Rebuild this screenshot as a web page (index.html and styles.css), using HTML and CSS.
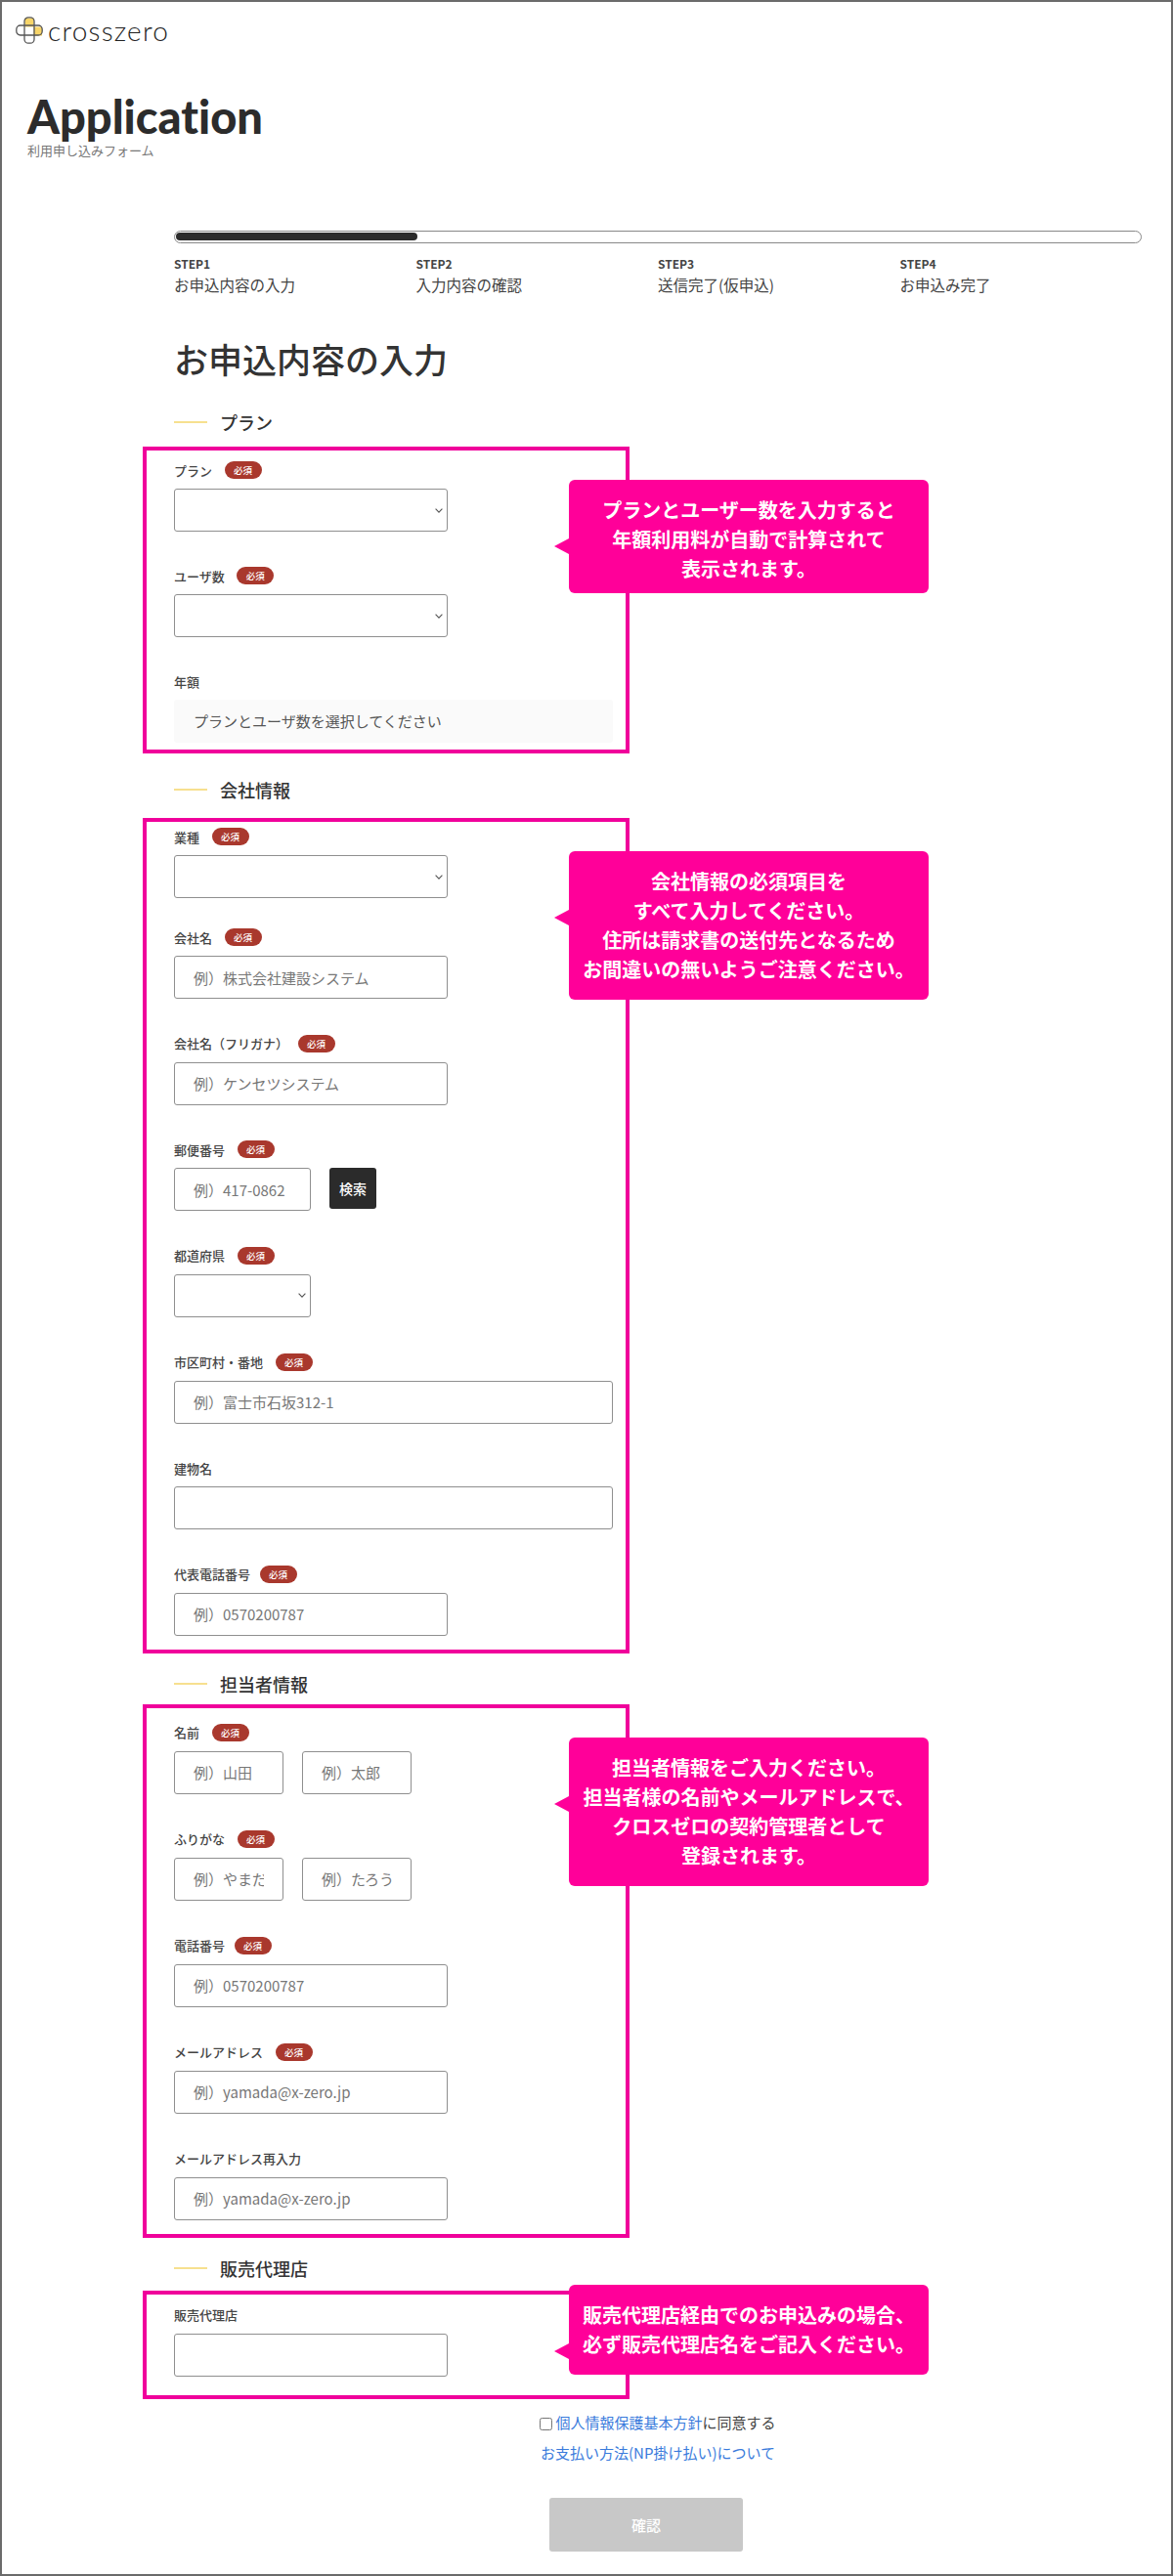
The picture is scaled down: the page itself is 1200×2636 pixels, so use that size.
FILE: index.html
```html
<!DOCTYPE html>
<html lang="ja">
<head>
    <meta charset="UTF-8">
    <meta name="viewport" content="width=device-width, initial-scale=1.0">
    <title>Application 利用申し込みフォーム</title>
    <link rel="stylesheet" href="styles.css">
</head>
<body>
    <div class="page">
        <header class="site-head">
            <div class="logo">
                <svg class="logo-icon" width="28" height="28" viewBox="0 0 28 28">
                    <path d="M9.5 1.5h9v9h8.5v9h-8.5v-9h-9z" fill="#f8d568"/>
                    <rect x="9" y="0.8" width="10" height="26.4" rx="4" fill="none" stroke="#555" stroke-width="1.3"/>
                    <rect x="0.8" y="9" width="26.4" height="10" rx="4" fill="none" stroke="#555" stroke-width="1.3"/>
                </svg>
                <span class="logo-text">crosszero</span>
            </div>
            <h1 class="page-title">Application</h1>
            <p class="page-sub">利用申し込みフォーム</p>
        </header>

        <main class="main">
            <div class="progress"><div class="progress-bar"></div></div>
            <ol class="steps">
                <li><span class="step-no">STEP1</span><span class="step-name">お申込内容の入力</span></li>
                <li><span class="step-no">STEP2</span><span class="step-name">入力内容の確認</span></li>
                <li><span class="step-no">STEP3</span><span class="step-name">送信完了(仮申込)</span></li>
                <li><span class="step-no">STEP4</span><span class="step-name">お申込み完了</span></li>
            </ol>

            <h2 class="form-title">お申込内容の入力</h2>

            <!-- プラン -->
            <section class="section section-plan">
                <h3 class="section-head">プラン</h3>
                <div class="box">
                    <div class="group">
                        <div class="label-row"><label>プラン</label><span class="badge">必須</span></div>
                        <select class="field w-md"></select>
                    </div>
                    <div class="group">
                        <div class="label-row"><label>ユーザ数</label><span class="badge">必須</span></div>
                        <select class="field w-md"></select>
                    </div>
                    <div class="group">
                        <div class="label-row"><label>年額</label></div>
                        <div class="price">プランとユーザ数を選択してください</div>
                    </div>
                    <div class="tip tip-short">プランとユーザー数を入力すると<br>年額利用料が自動で計算されて<br>表示されます。</div>
                </div>
            </section>

            <!-- 会社情報 -->
            <section class="section section-company">
                <h3 class="section-head">会社情報</h3>
                <div class="box">
                    <div class="group group-first">
                        <div class="label-row"><label>業種</label><span class="badge">必須</span></div>
                        <select class="field w-md"></select>
                    </div>
                    <div class="group">
                        <div class="label-row"><label>会社名</label><span class="badge">必須</span></div>
                        <input class="field w-md" type="text" placeholder="例）株式会社建設システム">
                    </div>
                    <div class="group">
                        <div class="label-row"><label>会社名（フリガナ）</label><span class="badge badge-near">必須</span></div>
                        <input class="field w-md" type="text" placeholder="例）ケンセツシステム">
                    </div>
                    <div class="group">
                        <div class="label-row"><label>郵便番号</label><span class="badge">必須</span></div>
                        <div class="zip-row">
                            <input class="field w-sm" type="text" placeholder="例）417-0862">
                            <button class="search-btn" type="button">検索</button>
                        </div>
                    </div>
                    <div class="group">
                        <div class="label-row"><label>都道府県</label><span class="badge">必須</span></div>
                        <select class="field w-sm"></select>
                    </div>
                    <div class="group">
                        <div class="label-row"><label>市区町村・番地</label><span class="badge">必須</span></div>
                        <input class="field w-full" type="text" placeholder="例）富士市石坂312-1">
                    </div>
                    <div class="group">
                        <div class="label-row"><label>建物名</label></div>
                        <input class="field w-full" type="text">
                    </div>
                    <div class="group">
                        <div class="label-row"><label>代表電話番号</label><span class="badge badge-near">必須</span></div>
                        <input class="field w-md" type="text" placeholder="例）0570200787">
                    </div>
                    <div class="tip">会社情報の必須項目を<br>すべて入力してください。<br>住所は請求書の送付先となるため<br>お間違いの無いようご注意ください。</div>
                </div>
            </section>

            <!-- 担当者情報 -->
            <section class="section section-contact">
                <h3 class="section-head">担当者情報</h3>
                <div class="box">
                    <div class="group">
                        <div class="label-row"><label>名前</label><span class="badge">必須</span></div>
                        <div class="name-row">
                            <input class="field w-xs" type="text" placeholder="例）山田">
                            <input class="field w-xs" type="text" placeholder="例）太郎">
                        </div>
                    </div>
                    <div class="group">
                        <div class="label-row"><label>ふりがな</label><span class="badge">必須</span></div>
                        <div class="name-row">
                            <input class="field w-xs" type="text" placeholder="例）やまだ">
                            <input class="field w-xs" type="text" placeholder="例）たろう">
                        </div>
                    </div>
                    <div class="group">
                        <div class="label-row"><label>電話番号</label><span class="badge badge-near">必須</span></div>
                        <input class="field w-md" type="text" placeholder="例）0570200787">
                    </div>
                    <div class="group">
                        <div class="label-row"><label>メールアドレス</label><span class="badge">必須</span></div>
                        <input class="field w-md" type="text" placeholder="例）yamada@x-zero.jp">
                    </div>
                    <div class="group">
                        <div class="label-row"><label>メールアドレス再入力</label></div>
                        <input class="field w-md" type="text" placeholder="例）yamada@x-zero.jp">
                    </div>
                    <div class="tip">担当者情報をご入力ください。<br>担当者様の名前やメールアドレスで、<br>クロスゼロの契約管理者として<br>登録されます。</div>
                </div>
            </section>

            <!-- 販売代理店 -->
            <section class="section section-agency">
                <h3 class="section-head">販売代理店</h3>
                <div class="box">
                    <div class="group">
                        <div class="label-row"><label>販売代理店</label></div>
                        <input class="field w-md" type="text">
                    </div>
                    <div class="tip tip-raised">販売代理店経由でのお申込みの場合、<br>必ず販売代理店名をご記入ください。</div>
                </div>
            </section>

            <div class="agree">
                <p><input class="agree-check" type="checkbox"><a href="#">個人情報保護基本方針</a>に同意する</p>
                <p class="agree-pay"><a href="#">お支払い方法(NP掛け払い)について</a></p>
            </div>
            <button class="confirm-btn" type="button" disabled>確認</button>
        </main>
    </div>
</body>
</html>
```

FILE: styles.css
```css
* {
    margin: 0;
    padding: 0;
    box-sizing: border-box;
}

body {
    font-family: "Noto Sans CJK JP", "Noto Sans", sans-serif;
    background-color: #fff;
    color: #333;
}

.page {
    width: 1200px;
    height: 2636px;
    border: 2px solid #6b6b6b;
    overflow: hidden;
}

/* ヘッダー */
.site-head {
    padding: 15px 0 0 14px;
}

.logo {
    display: flex;
    align-items: center;
    height: 28px;
}

.logo-text {
    margin-left: 5px;
    font-family: Lato, sans-serif;
    font-weight: 300;
    font-size: 28px;
    line-height: 28px;
    letter-spacing: 1.2px;
    color: #222;
}

.page-title {
    margin: 51px 0 0 12px;
    font-family: Lato, sans-serif;
    font-weight: 900;
    font-size: 47px;
    line-height: 46px;
    font-variant-ligatures: none;
    color: #2c2c2c;
}

.page-sub {
    margin: 3px 0 0 12px;
    font-size: 13px;
    line-height: 18px;
    color: #777;
}

/* メイン */
.main {
    width: 990px;
    margin: 73px 0 0 176px;
}

.progress {
    height: 13px;
    padding: 1px;
    border: 1.5px solid #888;
    border-radius: 7px;
}

.progress-bar {
    width: 247px;
    height: 8px;
    background-color: #2b2b2b;
    border-radius: 4px;
}

.steps {
    display: grid;
    grid-template-columns: repeat(4, 1fr);
    margin-top: 13px;
    list-style: none;
}

.steps li {
    display: flex;
    flex-direction: column;
}

.step-no {
    font-size: 12px;
    line-height: 16px;
    font-weight: 700;
    color: #444;
}

.step-name {
    margin-top: 2px;
    font-size: 15.5px;
    line-height: 22px;
    color: #444;
}

.form-title {
    margin-top: 43px;
    font-size: 35px;
    line-height: 44px;
    font-weight: 500;
    color: #333;
}

/* セクション */
.section-head {
    display: flex;
    align-items: center;
    height: 24px;
    font-size: 18px;
    font-weight: 500;
    color: #333;
}

.section-head::before {
    content: "";
    width: 34px;
    height: 2px;
    margin-right: 13px;
    background-color: #f7e08f;
}

.box {
    position: relative;
    width: 498px;
    margin-left: -32px;
    padding-left: 28px;
    padding-right: 14px;
    border: 4px solid #f0009b;
}

.section-plan { padding-top: 31px; }
.section-plan .section-head { margin-bottom: 13px; }
.section-plan .box { padding-top: 11px; padding-bottom: 7px; }
.section-plan .group + .group { margin-top: 36px; }

.section-company { padding-top: 25px; }
.section-company .section-head { margin-bottom: 17px; }
.section-company .box { padding-top: 6px; padding-bottom: 14px; }

.section-contact { padding-top: 19px; }
.section-contact .section-head { margin-bottom: 9px; }
.section-contact .box { padding-top: 16px; padding-bottom: 14px; }
.section-contact .group + .group { margin-top: 37px; }

.section-agency { padding-top: 19px; }
.section-agency .section-head { margin-bottom: 11px; }
.section-agency .box { padding-top: 12px; padding-bottom: 19px; }

.group + .group {
    margin-top: 36.67px;
}

.section-company .group-first + .group {
    margin-top: 31px;
}

.label-row {
    display: flex;
    align-items: center;
    gap: 12.5px;
    height: 18px;
    margin-bottom: 10px;
}

.label-row label {
    font-size: 13px;
    font-weight: 500;
    color: #444;
}

.badge {
    width: 38px;
    height: 18px;
    background-color: #a9382d;
    border-radius: 9px;
    color: #fff;
    font-size: 9.5px;
    font-weight: 500;
    line-height: 18px;
    text-align: center;
}

.badge-near {
    margin-left: -3px;
}

/* 入力欄 */
.field {
    height: 44px;
    padding: 0 19px;
    background-color: #fff;
    border: 1px solid #8f8f8f;
    border-radius: 3px;
    font-family: "Noto Sans CJK JP", "Noto Sans", sans-serif;
    font-size: 15px;
    color: #333;
}

.field::placeholder {
    color: #777;
    opacity: 1;
}

select.field {
    appearance: none;
    background-image: url("data:image/svg+xml,%3Csvg xmlns='http://www.w3.org/2000/svg' width='8' height='5' viewBox='0 0 8 5'%3E%3Cpath d='M.6.7 4 4.2 7.4.7' fill='none' stroke='%23555' stroke-width='1.1'/%3E%3C/svg%3E");
    background-repeat: no-repeat;
    background-position: right 4px center;
}

.w-xs { width: 112px; }
.w-sm { width: 140px; }
.w-md { width: 280px; }
.w-full { width: 449px; }

.zip-row {
    display: flex;
    gap: 19px;
}

.name-row {
    display: flex;
    gap: 19px;
}

.search-btn {
    width: 48px;
    height: 42px;
    background-color: #2b2b2b;
    border: none;
    border-radius: 3px;
    color: #fff;
    font-family: inherit;
    font-size: 14px;
    font-weight: 500;
}

.price {
    width: 449px;
    height: 44px;
    padding-left: 20px;
    background-color: #fafafa;
    border-radius: 3px;
    font-size: 15px;
    line-height: 44px;
    color: #555;
}

/* 吹き出し */
.tip {
    position: absolute;
    left: 432px;
    top: 30px;
    width: 368px;
    padding: 16px 0;
    background-color: #ff0099;
    border-radius: 6px;
    color: #fff;
    font-size: 20px;
    font-weight: 700;
    line-height: 30px;
    text-align: center;
}

.tip::before {
    content: "";
    position: absolute;
    left: -15px;
    top: 60px;
    border-top: 8px solid transparent;
    border-bottom: 8px solid transparent;
    border-right: 15px solid #ff0099;
}

.tip-short {
    padding-bottom: 10px;
}

.tip-raised {
    top: -10px;
}

/* 同意 */
.agree {
    width: 990px;
    margin-top: 12px;
    text-align: center;
    font-size: 15px;
    line-height: 24px;
    color: #444;
}

.agree a {
    color: #3a7bdc;
    text-decoration: none;
}

.agree-pay {
    margin-top: 7px;
}

.agree-check {
    width: 13px;
    height: 13px;
    margin-right: 3px;
    vertical-align: -2px;
}

.confirm-btn {
    display: block;
    width: 198px;
    height: 55px;
    margin: 34px 0 0 384px;
    background-color: #c8c8c8;
    border: none;
    border-radius: 3px;
    color: #fff;
    font-family: inherit;
    font-size: 15px;
    font-weight: 500;
}
```
